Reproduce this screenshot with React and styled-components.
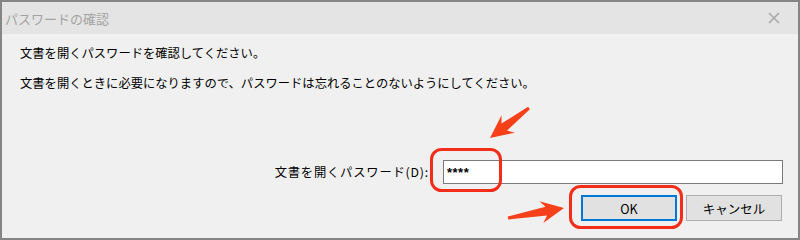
import styled, { createGlobalStyle } from "styled-components";

const Global = createGlobalStyle`
  html, body { margin: 0; padding: 0; background: #f0f0f0; }
  body { font-family: "Noto Sans CJK JP", "Noto Sans", sans-serif; }
`;

const Dialog = styled.div`
  position: relative;
  box-sizing: border-box;
  width: 800px;
  height: 240px;
  border: 2px solid #858585;
  background: #f0f0f0;
  display: flex;
  flex-direction: column;
`;

const TitleBar = styled.div`
  height: 32px;
  background: #e4e4e4;
  display: flex;
  align-items: center;
  justify-content: space-between;
  padding: 0 18px 0 3px;
  color: #a3a3a3;
  font-size: 13px;
`;

const Body = styled.div`
  flex: 1;
  padding: 4px 15px 0 18px;
  font-size: 12.3px;
  color: #000;
`;

const Message = styled.p`
  margin: 0;
  line-height: 30px;
  white-space: nowrap;
`;

const FieldRow = styled.div`
  margin-top: 62px;
  display: flex;
  justify-content: flex-end;
  align-items: center;
  gap: 14px;
`;

const Label = styled.label`
  white-space: nowrap;
  letter-spacing: 0.8px;
`;

const PasswordBox = styled.div`
  box-sizing: border-box;
  width: 340px;
  height: 24px;
  background: #fff;
  border: 1px solid #7a7a7a;
  padding: 0 3px;
  display: flex;
  align-items: center;
  font-family: "Liberation Sans", sans-serif;
  font-weight: bold;
  font-size: 13px;
  letter-spacing: 0.5px;
`;

const ButtonRow = styled.div`
  margin-top: 11px;
  padding-right: 1px;
  display: flex;
  justify-content: flex-end;
  gap: 9px;
`;

const Button = styled.button`
  box-sizing: border-box;
  width: 96px;
  height: 26px;
  margin: 0;
  background: #e1e1e1;
  border: ${(p) => (p.$primary ? "2px solid #0078d7" : "1px solid #adadad")};
  font-family: "Noto Sans CJK JP", sans-serif;
  font-size: 12.5px;
  color: #000;
  padding: 0;
`;

const Overlay = styled.svg`
  position: absolute;
  left: -2px;
  top: -2px;
  width: 800px;
  height: 240px;
  pointer-events: none;
`;

const arrow = (x1, y1, x2, y2) => {
  const dx = x2 - x1;
  const dy = y2 - y1;
  const L = Math.hypot(dx, dy);
  const ux = dx / L;
  const uy = dy / L;
  const nx = -uy;
  const ny = ux;
  const local = [
    [0, -1.5],
    [L - 18, -4.5],
    [L - 23, -11],
    [L, 0],
    [L - 23, 11],
    [L - 18, 4.5],
    [0, 1.5],
  ];
  return local
    .map(([a, b]) => `${(x1 + ux * a + nx * b).toFixed(1)},${(y1 + uy * a + ny * b).toFixed(1)}`)
    .join(" ");
};

export default function App() {
  return (
    <>
      <Global />
      <Dialog>
        <TitleBar>
          <span>パスワードの確認</span>
          <svg width="12" height="12" viewBox="0 0 12 12">
            <path d="M1 1 L11 11 M11 1 L1 11" stroke="#a8a8a8" strokeWidth="1.6" />
          </svg>
        </TitleBar>
        <Body>
          <Message>文書を開くパスワードを確認してください。</Message>
          <Message>
            文書を開くときに必要になりますので、パスワードは忘れることのないようにしてください。
          </Message>
          <FieldRow>
            <Label>文書を開くパスワード(D):</Label>
            <PasswordBox>****</PasswordBox>
          </FieldRow>
          <ButtonRow>
            <Button $primary>OK</Button>
            <Button>キャンセル</Button>
          </ButtonRow>
        </Body>
        <Overlay viewBox="0 0 800 240">
          <rect x="431.5" y="149.5" width="69" height="41" rx="10" fill="none" stroke="#f22d1a" strokeWidth="3" />
          <rect x="570.5" y="186.5" width="111" height="41" rx="10" fill="none" stroke="#f22d1a" strokeWidth="3" />
          <polygon points={arrow(529, 108, 490, 138)} fill="#f5401a" />
          <polygon points={arrow(508, 218, 564, 208)} fill="#f5401a" />
        </Overlay>
      </Dialog>
    </>
  );
}
